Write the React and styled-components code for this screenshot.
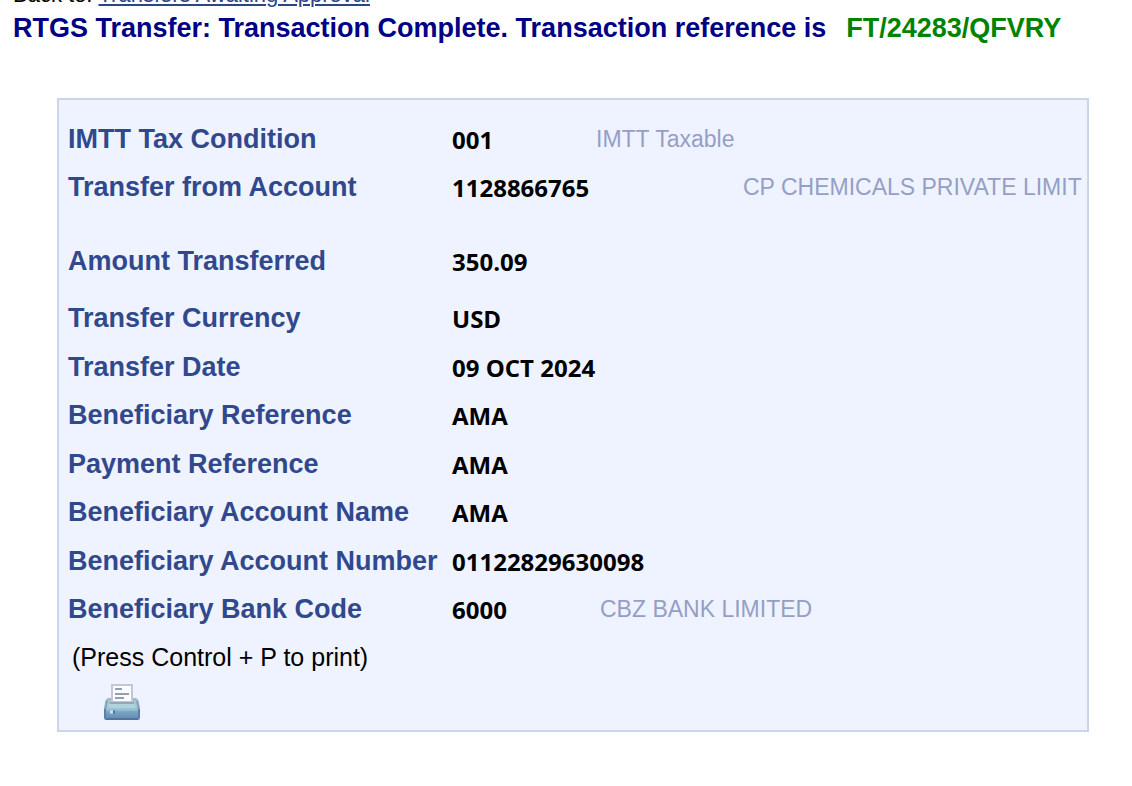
import React from "react"
import styled, { createGlobalStyle } from "styled-components"

const GlobalStyle = createGlobalStyle`
  body {
    margin: 0;
    background-color: #ffffff;
    font-family: "Liberation Sans", Arial, sans-serif;
  }
`

const Page = styled.main`
  padding: 0 43px 54px 13px;
`

const BackLine = styled.nav`
  display: flex;
  align-items: flex-end;
  gap: 6px;
  height: 7px;
  overflow: hidden;
  color: #000000;
  font-size: 22px;
  line-height: 24px;
`

const BackLink = styled.a`
  color: #2c4586;
  text-decoration: underline;
  text-decoration-thickness: 2px;
  text-underline-offset: 2px;
`

const Title = styled.h1`
  display: flex;
  flex-wrap: wrap;
  column-gap: 20px;
  margin: 0;
  padding-top: 5px;
  color: #000084;
  font-size: 27px;
  line-height: 32px;
`

const Reference = styled.span`
  color: #008400;
`

const Panel = styled.section`
  margin: 54px 0 0 44px;
  padding: 15px 4px 10px 8px;
  border: 2px solid #c9d5e8;
  background-color: #eff3ff;
`

const Details = styled.table`
  width: 100%;
  border-collapse: collapse;
`

const Row = styled.tr`
  height: ${props => props.$height || 48}px;
  vertical-align: top;
  &:nth-child(even) {
    height: ${props => props.$height || 49}px;
  }
`

const Label = styled.th`
  width: 384px;
  padding: 8px 0 0 1px;
  color: #31498c;
  font-size: 27px;
  line-height: 32px;
  text-align: left;
  white-space: nowrap;
`

const Cell = styled.td`
  padding: 8px 0 0;
`

const Content = styled.div`
  display: flex;
`

const Value = styled.span`
  min-width: ${props => props.$width || 0}px;
  padding-top: 1px;
  color: #000000;
  font-family: "Open Sans", "Noto Sans", sans-serif;
  font-size: 24px;
  font-weight: 700;
  line-height: 32px;
`

const Note = styled.span`
  color: #949fc6;
  font-size: 23px;
  line-height: 32px;
  white-space: nowrap;
`

const Hint = styled.p`
  margin: 0;
  padding: 7px 0 0 5px;
  color: #000000;
  font-size: 25px;
  line-height: 32px;
`

const PrintButton = styled.button`
  display: block;
  margin: 11px 0 0 37px;
  padding: 0;
  border: none;
  background: none;
  cursor: pointer;
`

const Icon = styled.svg`
  display: block;
  width: 36px;
  height: 36px;
`

const rows = [
  { label: "IMTT Tax Condition", value: "001", note: "IMTT Taxable", width: 144 },
  {
    label: "Transfer from Account",
    value: "1128866765",
    note: "CP CHEMICALS PRIVATE LIMIT",
    width: 291,
    height: 74,
  },
  { label: "Amount Transferred", value: "350.09", height: 57 },
  { label: "Transfer Currency", value: "USD" },
  { label: "Transfer Date", value: "09 OCT 2024" },
  { label: "Beneficiary Reference", value: "AMA" },
  { label: "Payment Reference", value: "AMA" },
  { label: "Beneficiary Account Name", value: "AMA" },
  { label: "Beneficiary Account Number", value: "01122829630098" },
  { label: "Beneficiary Bank Code", value: "6000", note: "CBZ BANK LIMITED", width: 148 },
]

function PrinterIcon() {
  return (
    <Icon viewBox="0 0 36 36" aria-hidden="true">
      <defs>
        <linearGradient id="printer-body" x1="0" y1="0" x2="0" y2="1">
          <stop offset="0" stopColor="#9db5c1" />
          <stop offset="0.3" stopColor="#a9cddb" />
          <stop offset="0.55" stopColor="#96bfd2" />
          <stop offset="0.62" stopColor="#7aa5c4" />
          <stop offset="1" stopColor="#6088ae" />
        </linearGradient>
      </defs>
      <path
        d="M5 14h26q3 0 4 4l1 6v10q0 2-2 2H2q-2 0-2-2V24l1-6q1-4 4-4z"
        fill="url(#printer-body)"
      />
      <path d="M3 17l-2 9M33 17l2 9" stroke="#86a2b3" strokeWidth="2" />
      <path d="M5 22h26" stroke="#aed3df" strokeWidth="4" />
      <path d="M1 25v9M35 25v9" stroke="#5b7fa5" strokeWidth="2" />
      <path d="M2 35h32" stroke="#527399" strokeWidth="2" />
      <path d="M8 1h20v17H8z" fill="#fdfdff" stroke="#c2c7d8" strokeWidth="2" />
      <path d="M6 19h24" stroke="#8fa9b8" strokeWidth="2" />
      <path d="M11 5h7M11 10h14M11 14h9" stroke="#929fb2" strokeWidth="2" />
      <path d="M6 28h3" stroke="#c4e3f0" strokeWidth="3" />
      <path d="M9 28h2" stroke="#4a7499" strokeWidth="3" />
    </Icon>
  )
}

function App() {
  return (
    <Page>
      <GlobalStyle />
      <BackLine>
        <span>Back to:</span>
        <BackLink href="#approvals">Transfers Awaiting Approval</BackLink>
      </BackLine>
      <Title>
        <span>RTGS Transfer: Transaction Complete. Transaction reference is</span>
        <Reference>FT/24283/QFVRY</Reference>
      </Title>
      <Panel>
        <Details>
          <tbody>
            {rows.map(({ label, value, note, width, height }) => (
              <Row key={label} $height={height}>
                <Label scope="row">{label}</Label>
                <Cell>
                  <Content>
                    <Value $width={width}>{value}</Value>
                    {note && <Note>{note}</Note>}
                  </Content>
                </Cell>
              </Row>
            ))}
          </tbody>
        </Details>
        <Hint>(Press Control + P to print)</Hint>
        <PrintButton type="button" aria-label="Print" onClick={() => window.print()}>
          <PrinterIcon />
        </PrintButton>
      </Panel>
    </Page>
  )
}

export default App
